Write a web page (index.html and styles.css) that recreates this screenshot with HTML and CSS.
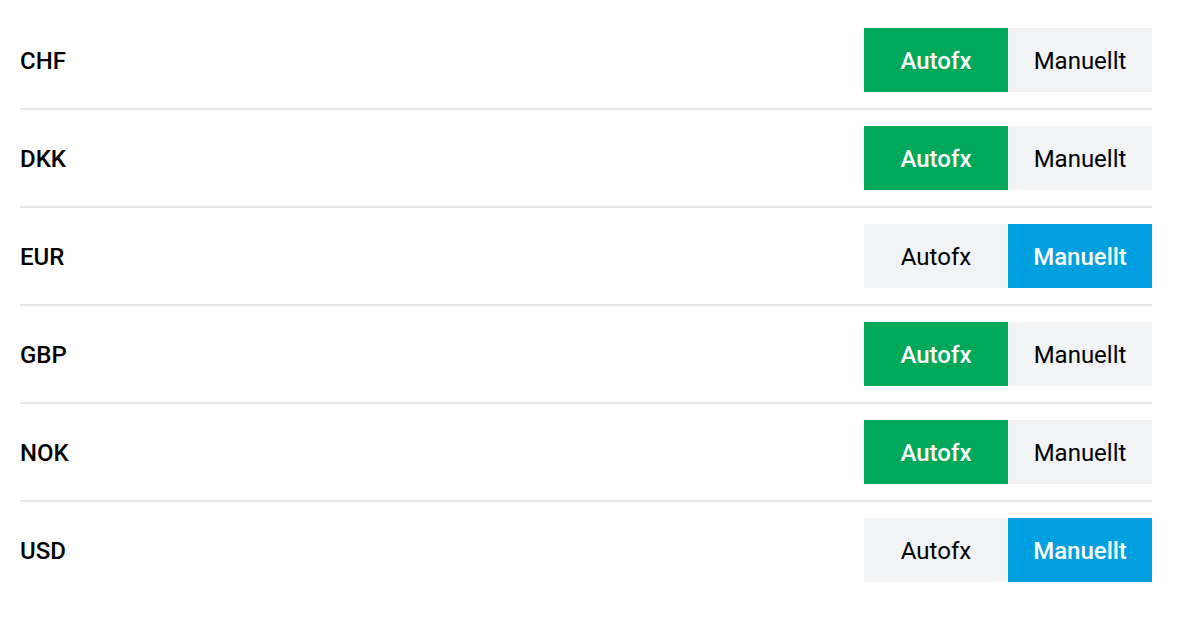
FILE: index.html
```html
<!DOCTYPE html>
<html>
<head>
<meta charset="utf-8">
<link rel="stylesheet" href="styles.css">
</head>
<body>
<div class="list">
  <div class="row"><span class="code">CHF</span><div class="toggle"><span class="opt auto on">Autofx</span><span class="opt">Manuellt</span></div></div>
  <div class="row"><span class="code">DKK</span><div class="toggle"><span class="opt auto on">Autofx</span><span class="opt">Manuellt</span></div></div>
  <div class="row"><span class="code">EUR</span><div class="toggle"><span class="opt">Autofx</span><span class="opt manual on">Manuellt</span></div></div>
  <div class="row"><span class="code">GBP</span><div class="toggle"><span class="opt auto on">Autofx</span><span class="opt">Manuellt</span></div></div>
  <div class="row"><span class="code">NOK</span><div class="toggle"><span class="opt auto on">Autofx</span><span class="opt">Manuellt</span></div></div>
  <div class="row"><span class="code">USD</span><div class="toggle"><span class="opt">Autofx</span><span class="opt manual on">Manuellt</span></div></div>
</div>
</body>
</html>
```
FILE: styles.css
```css
html, body {
  margin: 0;
  padding: 0;
  background: #fff;
}
body {
  font-family: Roboto, "Liberation Sans", sans-serif;
  color: #000;
}
.list {
  padding: 12px 25px 0 20px;
}
.row {
  display: flex;
  align-items: center;
  justify-content: space-between;
  padding: 16px 0;
  border-bottom: 2px solid #e6e6e6;
}
.row:last-child {
  border-bottom: none;
}
.code {
  font-size: 24px;
  font-weight: 500;
  padding-top: 2px;
}
.toggle {
  display: flex;
}
.opt {
  box-sizing: border-box;
  width: 144px;
  height: 64px;
  padding-top: 2px;
  display: flex;
  align-items: center;
  justify-content: center;
  background: #f2f3f5;
  font-size: 24px;
  font-weight: 400;
  color: #000;
}
.opt.on {
  color: #fff;
  font-weight: 500;
}
.opt.auto.on {
  background: #00a85a;
}
.opt.manual.on {
  background: #00a0e0;
}
```
